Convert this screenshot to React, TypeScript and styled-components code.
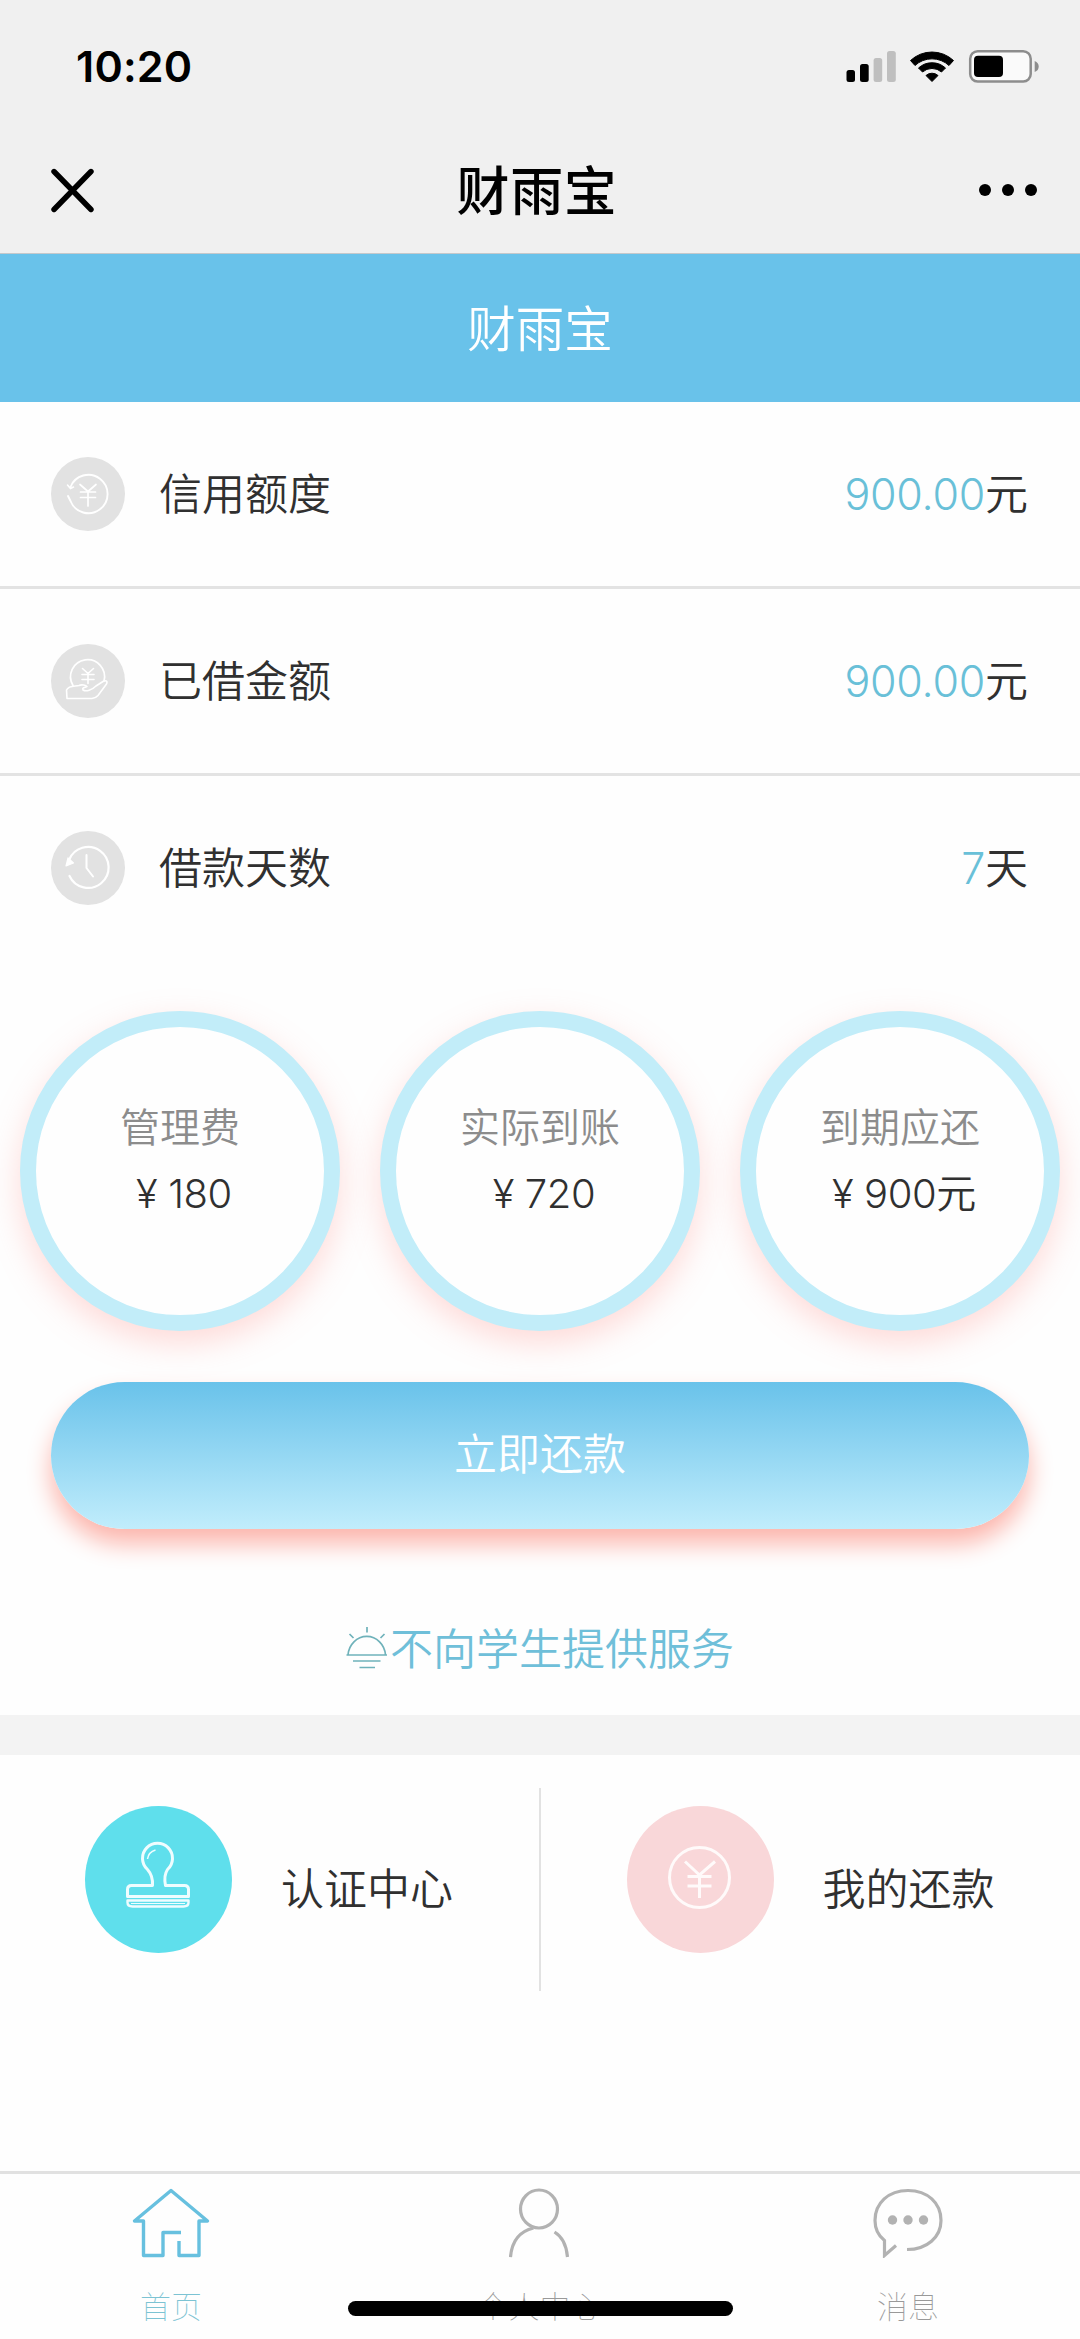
import React from "react";
import styled, { createGlobalStyle } from "styled-components";

const GlobalStyle = createGlobalStyle`
  * { box-sizing: border-box; }
  html, body { margin: 0; padding: 0; background: #fefefe; }
`;

const Screen = styled.div`
  position: relative;
  display: flex;
  flex-direction: column;
  width: 1080px;
  height: 2339px;
  overflow: hidden;
  background: #fefefe;
  color: #303030;
  font-family: Inter, "Noto Sans CJK SC", "Liberation Sans", sans-serif;
  font-weight: 350;
  font-size: 43px;
`;

const StatusBar = styled.div`
  flex: none;
  display: flex;
  justify-content: space-between;
  align-items: center;
  height: 132px;
  padding: 0 40px 0 76px;
  background: #f0f0f0;
`;

const Clock = styled.span`
  font-size: 43px;
  font-weight: 600;
  letter-spacing: 0.2px;
  line-height: 52px;
  color: #000;
`;

const NavBar = styled.div`
  flex: none;
  display: flex;
  justify-content: space-between;
  align-items: center;
  height: 122px;
  padding: 0 41px 6px 50px;
  background: #f0f0f0;
  border-bottom: 1px solid #c4c8cb;
`;

const NavTitle = styled.h1`
  margin: 0;
  padding-top: 4px;
  font-size: 53px;
  font-weight: 500;
  line-height: 64px;
  letter-spacing: 0.6px;
  color: #000;
`;

const Banner = styled.div`
  flex: none;
  display: flex;
  justify-content: center;
  align-items: center;
  height: 148px;
  padding-top: 4px;
  font-size: 48.5px;
  line-height: 60px;
  color: #fff;
  background: #69c2ea;
`;

const Row = styled.div<{ $last?: boolean }>`
  flex: none;
  display: flex;
  align-items: center;
  height: ${(p) => (p.$last ? 184 : 187)}px;
  padding: 0 52px 0 51px;
  border-bottom: ${(p) => (p.$last ? "none" : "3px solid #e3e3e3")};
`;

const Badge = styled.span<{ $size: number; $color: string }>`
  flex: none;
  display: flex;
  justify-content: center;
  align-items: center;
  width: ${(p) => p.$size}px;
  height: ${(p) => p.$size}px;
  border-radius: 50%;
  background: ${(p) => p.$color};
`;

const RowLabel = styled.span`
  flex: 1;
  margin-left: 34px;
  line-height: 60px;
`;

const RowValue = styled.span`
  display: flex;
  align-items: center;
  line-height: 60px;
`;

const Figure = styled.span`
  font-weight: 300;
  letter-spacing: -0.25px;
  color: #69c0d8;
`;

const Rings = styled.div`
  flex: none;
  display: grid;
  grid-template-columns: repeat(3, 1fr);
  justify-items: center;
  height: 372px;
  padding-top: 51px;
`;

const Ring = styled.div`
  display: flex;
  flex-direction: column;
  align-items: center;
  width: 320px;
  height: 320px;
  padding-top: 73px;
  border: 16px solid #c2edf9;
  border-radius: 50%;
  background: #fefefe;
  box-shadow: 0 12px 32px rgba(255, 150, 145, 0.34);
`;

const RingLabel = styled.span`
  font-size: 40px;
  line-height: 56px;
  color: #8c8c8c;
`;

const RingAmount = styled.span`
  display: flex;
  margin-top: 10px;
  font-size: 40px;
  line-height: 56px;
  letter-spacing: -0.4px;
`;

const Currency = styled.span`
  width: 40px;
  padding-right: 3px;
  text-align: center;
`;

const RepayButton = styled.button`
  flex: none;
  height: 147px;
  margin: 50px 51px 0;
  padding: 0 0 3px;
  border: 0;
  border-radius: 74px;
  font: inherit;
  line-height: 60px;
  color: #fff;
  background: linear-gradient(#69c2ea, #c1edfc);
  box-shadow: 0 15px 24px #fcb5ac;
`;

const Notice = styled.div`
  flex: none;
  display: flex;
  justify-content: center;
  align-items: center;
  height: 186px;
  padding: 51px 0 0;
  line-height: 60px;
  color: #6fbfd9;
`;

const NoticeText = styled.span`
  padding-top: 2px;
`;

const Band = styled.div`
  flex: none;
  height: 40px;
  background: #f3f3f3;
`;

const Shortcuts = styled.div`
  flex: none;
  display: flex;
  height: 236px;
  padding-top: 33px;
`;

const Shortcut = styled.div<{ $divided?: boolean }>`
  flex: 1;
  display: flex;
  align-items: flex-start;
  gap: 49px;
  padding: 18px 0 0 ${(p) => (p.$divided ? 85 : 86)}px;
  border-right: ${(p) => (p.$divided ? "2px solid #e2e2e2" : "none")};
`;

const ShortcutLabel = styled.span`
  margin-top: 53px;
  line-height: 60px;
`;

const TabBar = styled.nav`
  flex: none;
  display: flex;
  justify-content: space-between;
  height: 168px;
  margin-top: auto;
  padding: 14px 110px 0 109px;
  border-top: 3px solid #e1e1e1;
`;

const Tab = styled.a<{ $active?: boolean }>`
  display: flex;
  flex-direction: column;
  align-items: center;
  width: 124px;
  font-size: 31px;
  font-weight: 100;
  line-height: 44px;
  color: ${(p) => (p.$active ? "#7cc3d3" : "#999")};
`;

const TabLabel = styled.span`
  margin-top: 27px;
`;

const HomeIndicator = styled.div`
  position: absolute;
  left: 348px;
  bottom: 23px;
  width: 385px;
  height: 15px;
  border-radius: 8px;
  background: #000;
`;

const StatusIcons = () => (
  <svg width="194" height="34" viewBox="846 49 194 34">
    <rect x="846.5" y="70" width="8.5" height="12" rx="2.5" />
    <rect x="860" y="64" width="8.7" height="18" rx="2.5" />
    <rect x="873.6" y="58" width="8.6" height="24" rx="2.5" fill="#bfbfbf" />
    <rect x="887" y="51" width="8.8" height="31" rx="2.5" fill="#bfbfbf" />
    <path d="M910.5 60.500A31.500 31.500 0 0 1 953.500 60.500L949 65.500A25 25 0 0 0 915 65.500Z" strokeLinejoin="round" stroke="#000" strokeWidth="1" />
    <path d="M918.500 68A20 20 0 0 1 945.500 68L941.500 72A14.500 14.500 0 0 0 922.500 72Z" stroke="#000" strokeLinejoin="round" strokeWidth="1" />
    <path d="M926 75.500A9 9 0 0 1 938 75.500L932 81.500Z" stroke="#000" strokeLinejoin="round" strokeWidth="1" />
    <rect x="970.2" y="51.200" width="60.500" height="30.300" rx="7.500" fill="#fafafa" stroke="#8d8d8d" strokeWidth="2.500" />
    <rect x="974" y="55.800" width="29" height="21.200" rx="4" />
    <path d="M1034.700 61v11q4-1.500 4-5.500t-4-5.500z" fill="#8d8d8d" />
  </svg>
);

const CloseIcon = () => (
  <svg width="45" height="46" viewBox="0 0 45 46" fill="none" stroke="#000" strokeWidth="5.400" strokeLinecap="round">
    <path d="M4 4.500L41 42.500M41 4.500L4 42.500" />
  </svg>
);

const MoreIcon = () => (
  <svg width="60" height="12" viewBox="0 0 60 12">
    <circle cx="6" cy="6" r="6" />
    <circle cx="29" cy="6" r="6" />
    <circle cx="52" cy="6" r="6" />
  </svg>
);

const CreditIcon = () => (
  <svg width="74" height="74" viewBox="0 0 74 74" fill="none" stroke="#fff" strokeLinecap="round">
    <path d="M19.500 30A19.200 19.200 0 1 1 19.500 44L17 39" strokeWidth="1.900" />
    <path d="M16.500 28L19.500 31.500L22.500 30" strokeWidth="1.600" />
    <path d="M29 27.500L37 34.500L45 27.500M29.500 35H44.500M29.500 40.500H44.500M37 35V49" strokeWidth="1.700" />
  </svg>
);

const LoanIcon = () => (
  <svg width="74" height="74" viewBox="0 0 74 74" fill="none" stroke="#fff" strokeLinecap="round" strokeLinejoin="round">
    <path d="M22 41.500A17 17 0 1 1 53 37" strokeWidth="1.700" />
    <path d="M31.500 24.500L37 29.500L42.500 24.500M31 30.500H43M31 35.500H43M37 30V39.500" strokeWidth="1.600" />
    <path d="M16 54.500L15.500 46C18 41 24 42.500 28 41.500C31 40 35 41.500 36 42.500C33 43.500 31 44 32 46C35 48 41 46 45 42L52 37.500C54.500 36 57 37 55.500 40L47 51.500Q45 54 41 54.500Z" strokeWidth="1.600" />
  </svg>
);

const DaysIcon = () => (
  <svg width="74" height="74" viewBox="0 0 74 74" fill="none" stroke="#fff" strokeLinecap="round" strokeLinejoin="round">
    <path d="M18 29A20.500 20.500 0 1 1 18.500 45" strokeWidth="2.200" />
    <path d="M17 27L15 35L22.500 32Z" fill="#fff" strokeWidth="1.200" />
    <path d="M35.500 24V37L42 45.500" strokeWidth="2" />
  </svg>
);

const SunIcon = () => (
  <svg width="44" height="44" viewBox="0 0 44 44" fill="none" stroke="#6fb2ba" strokeWidth="1.700">
    <path d="M0.500 29H41M2 29A18.800 20 0 0 1 39.500 29M7 35H34.500M13.500 41.500H29M21 1V6.500M3.500 8L7.500 12M38.500 8L34.500 12" />
  </svg>
);

const StampIcon = () => (
  <svg width="147" height="147" viewBox="0 0 147 147" fill="none" stroke="#effdff" strokeWidth="3" strokeLinejoin="round">
    <path d="M67.500 79.500C68 72 66.500 68 62.500 63.500A15 15 0 1 1 82.500 63.500C79.500 68 79 72 80.500 79.500H99.500Q103.500 79.500 103.500 83.500V90.500H42.500V83.500Q42.500 79.500 46.500 79.500Z" />
    <path d="M42.500 94.500H103.500V96.500Q103.500 100.500 98.500 100.500H47.500Q42.500 100.500 42.500 96.500Z" strokeWidth="2.400" />
    <path d="M62.500 53Q63.500 46 70.500 44" strokeWidth="1.500" />
    <path d="M46 97.500H100" strokeWidth="1" />
  </svg>
);

const YuanIcon = () => (
  <svg width="147" height="147" viewBox="0 0 147 147" fill="none" stroke="#fffafa" strokeWidth="3">
    <circle cx="72.500" cy="71.500" r="30" />
    <path d="M58 55.500L72.500 69L88 55.500M60.500 70.500H84.500M60.500 80H84.500M72.500 69V92" />
  </svg>
);

const HomeIcon = () => (
  <svg width="78" height="70" viewBox="0 0 78 70" fill="none" stroke="#67c0df" strokeWidth="3.400" strokeLinejoin="round">
    <path d="M49 44.500H31V67.500H11.500V33H2.500L39 2.500L75.500 33H67V67.500H47V53" />
  </svg>
);

const PersonIcon = () => (
  <svg width="62" height="70" viewBox="0 0 62 70" fill="none" stroke="#b2b2b2" strokeWidth="3.200">
    <ellipse cx="30" cy="21" rx="18.500" ry="19" />
    <path d="M1.500 69Q3.500 45 24.500 40M45.500 44Q57 51 58.500 69" />
  </svg>
);

const ChatIcon = () => (
  <svg width="70" height="70" viewBox="0 0 70 70" fill="none" stroke="#b2b2b2" strokeWidth="3.200">
    <path d="M23 57.500L11.500 67.500V52.500C4.500 47 2 39.500 2 32.500C2 15 15.500 2.500 35 2.500S68 15 68 32.500C68 49 54 61.500 34 61.500" />
    <g fill="#b2b2b2" stroke="none">
      <circle cx="19.500" cy="32" r="4.700" />
      <circle cx="35" cy="32" r="4.700" />
      <circle cx="50.500" cy="32" r="4.700" />
    </g>
  </svg>
);

const summary = [
  { label: "信用额度", figure: "900.00", unit: "元", icon: <CreditIcon /> },
  { label: "已借金额", figure: "900.00", unit: "元", icon: <LoanIcon /> },
  { label: "借款天数", figure: "7", unit: "天", icon: <DaysIcon /> },
];

const fees = [
  { label: "管理费", amount: "180" },
  { label: "实际到账", amount: "720" },
  { label: "到期应还", amount: "900元" },
];

const App: React.FC = () => (
  <Screen>
    <GlobalStyle />
    <StatusBar>
      <Clock>10:20</Clock>
      <StatusIcons />
    </StatusBar>
    <NavBar>
      <CloseIcon />
      <NavTitle>财雨宝</NavTitle>
      <MoreIcon />
    </NavBar>
    <Banner>财雨宝</Banner>
    {summary.map((item, i) => (
      <Row key={item.label} $last={i === summary.length - 1}>
        <Badge $size={74} $color="#e2e2e2">{item.icon}</Badge>
        <RowLabel>{item.label}</RowLabel>
        <RowValue>
          <Figure>{item.figure}</Figure>
          {item.unit}
        </RowValue>
      </Row>
    ))}
    <Rings>
      {fees.map((fee) => (
        <Ring key={fee.label}>
          <RingLabel>{fee.label}</RingLabel>
          <RingAmount>
            <Currency>¥</Currency>
            {fee.amount}
          </RingAmount>
        </Ring>
      ))}
    </Rings>
    <RepayButton type="button">立即还款</RepayButton>
    <Notice>
      <SunIcon />
      <NoticeText>不向学生提供服务</NoticeText>
    </Notice>
    <Band />
    <Shortcuts>
      <Shortcut $divided>
        <Badge $size={147} $color="#5fdfec"><StampIcon /></Badge>
        <ShortcutLabel>认证中心</ShortcutLabel>
      </Shortcut>
      <Shortcut>
        <Badge $size={147} $color="#f9d7d9"><YuanIcon /></Badge>
        <ShortcutLabel>我的还款</ShortcutLabel>
      </Shortcut>
    </Shortcuts>
    <TabBar>
      <Tab $active>
        <HomeIcon />
        <TabLabel>首页</TabLabel>
      </Tab>
      <Tab>
        <PersonIcon />
        <TabLabel>个人中心</TabLabel>
      </Tab>
      <Tab>
        <ChatIcon />
        <TabLabel>消息</TabLabel>
      </Tab>
    </TabBar>
    <HomeIndicator />
  </Screen>
);

export default App;
